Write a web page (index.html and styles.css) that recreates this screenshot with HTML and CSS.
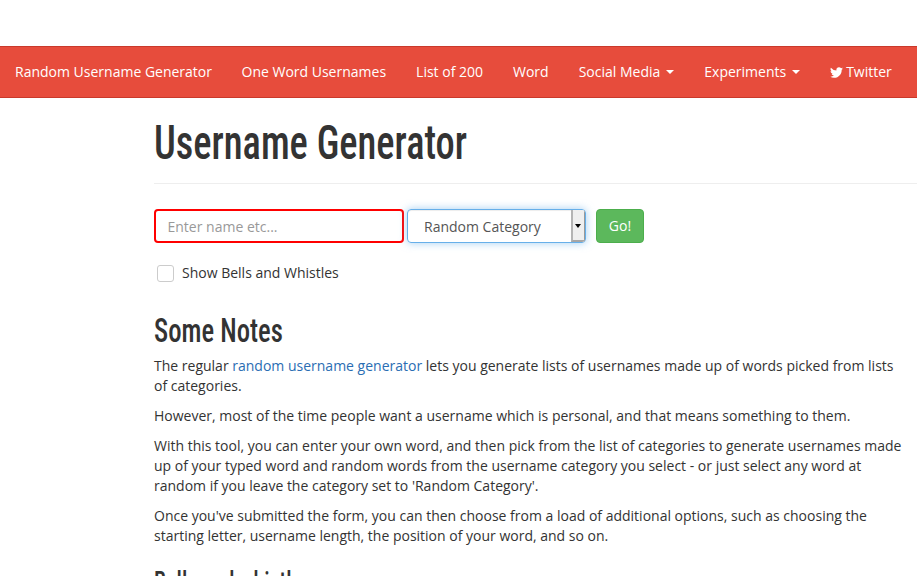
FILE: index.html
```html
<!DOCTYPE html>
<html lang="en">
<head>
<meta charset="utf-8">
<title>Username Generator</title>
<link rel="stylesheet" href="styles.css">
</head>
<body>
<nav class="navbar">
  <a class="brand" href="#">Random Username Generator</a>
  <a class="nav-link" href="#">One Word Usernames</a>
  <a class="nav-link" href="#">List of 200</a>
  <a class="nav-link" href="#">Word</a>
  <a class="nav-link" href="#">Social Media <span class="caret"></span></a>
  <a class="nav-link" href="#">Experiments <span class="caret"></span></a>
  <a class="nav-link" href="#"><svg class="tw" viewBox="0 0 24 24"><path d="M23.95 4.57a10 10 0 0 1-2.82.77 4.96 4.96 0 0 0 2.16-2.72c-.95.55-2 .96-3.12 1.19a4.92 4.92 0 0 0-8.38 4.48A13.96 13.96 0 0 1 1.64 3.16a4.82 4.82 0 0 0-.67 2.48c0 1.71.87 3.21 2.19 4.1a4.9 4.9 0 0 1-2.23-.62v.06a4.92 4.92 0 0 0 3.95 4.83 5 5 0 0 1-2.21.08 4.94 4.94 0 0 0 4.6 3.42A9.87 9.87 0 0 1 0 19.54a14 14 0 0 0 7.56 2.21c9.05 0 14-7.5 14-13.98 0-.21 0-.42-.02-.63a9.94 9.94 0 0 0 2.46-2.55z"/></svg> Twitter</a>
</nav>
<main class="content">
  <h1 class="title"><span class="squeeze">Username Generator</span></h1>
  <form class="gen-form">
    <input class="name-input" type="text" placeholder="Enter name etc...">
    <div class="select-box">
      <span class="select-value">Random Category</span>
      <span class="select-arrow"></span>
    </div>
    <button class="go" type="button">Go!</button>
  </form>
  <label class="check"><span class="check-box"></span>Show Bells and Whistles</label>
  <h2 class="subtitle"><span class="squeeze">Some Notes</span></h2>
  <p>The regular <a class="link" href="#">random username generator</a> lets you generate lists of usernames made up of words picked from lists of categories.</p>
  <p>However, most of the time people want a username which is personal, and that means something to them.</p>
  <p>With this tool, you can enter your own word, and then pick from the list of categories to generate usernames made up of your typed word and random words from the username category you select - or just select any word at random if you leave the category set to 'Random Category'.</p>
  <p>Once you've submitted the form, you can then choose from a load of additional options, such as choosing the starting letter, username length, the position of your word, and so on.</p>
  <h2 class="subtitle lower"><span class="squeeze">Bells and whistles</span></h2>
</main>
</body>
</html>
```
FILE: styles.css
```css
* { box-sizing: border-box; }
html, body { height: 100%; overflow: hidden; }
body {
  margin: 0;
  padding-top: 46px;
  font-family: "Open Sans", sans-serif;
  font-size: 14px;
  line-height: 20px;
  color: #333;
  background: #fff;
}
a { text-decoration: none; }
.navbar {
  display: flex;
  align-items: center;
  height: 52px;
  padding-left: 15px;
  background: #e74c3c;
  border-top: 1px solid #c9392b;
  border-bottom: 1px solid #c9392b;
  white-space: nowrap;
}
.brand, .nav-link { color: #fff; }
.brand { margin-right: 29.5px; }
.nav-link { margin-right: 30px; display: flex; align-items: center; }
.caret {
  width: 0;
  height: 0;
  margin-left: 6px;
  border-top: 4px solid #fff;
  border-left: 4px solid transparent;
  border-right: 4px solid transparent;
}
.tw { width: 13px; height: 13px; fill: #fff; margin-right: 3px; }
.content { width: 748px; margin-left: 154px; }
.squeeze { display: inline-block; transform-origin: left center; transform: scaleX(.785); white-space: nowrap; }
.title {
  margin: 20px 0 0;
  padding-bottom: 15px;
  width: 763px;
  border-bottom: 1px solid #eee;
  font-family: "Liberation Sans Narrow", "Roboto Condensed", "Liberation Sans", sans-serif;
  font-size: 49px;
  line-height: 50px;
  font-weight: 500;
  color: #333;
}
.gen-form { display: flex; align-items: center; margin-top: 25px; }
.name-input {
  width: 250px;
  height: 34px;
  padding: 6px 11.5px;
  border: 2px solid #f00;
  border-radius: 4px;
  outline: 0;
  font: inherit;
  color: #555;
}
.name-input::placeholder { color: #999; opacity: 1; }
.select-box {
  display: flex;
  align-items: stretch;
  width: 179px;
  height: 34px;
  margin-left: 3px;
  border: 1px solid #66afe9;
  border-radius: 4px;
  box-shadow: inset 0 1px 1px rgba(0,0,0,.075), 0 0 8px rgba(102,175,233,.6);
  overflow: hidden;
  color: #555;
}
.select-value { flex: 1; padding: 7px 16px 5px; }
.select-arrow {
  position: relative;
  width: 14px;
  background: #efefef;
  border-left: 2px solid #b4b4b4;
  border-right: 1px solid #999;
  border-bottom: 2px solid #a6a6a6;
}
.select-arrow::after {
  content: "";
  position: absolute;
  left: 2px;
  top: 14px;
  border-top: 4px solid #000;
  border-left: 3px solid transparent;
  border-right: 3px solid transparent;
}
.go {
  width: 48px;
  height: 34px;
  margin-left: 10px;
  padding: 0;
  background: #5cb85c;
  border: 1px solid #4cae4c;
  border-radius: 4px;
  color: #fff;
  font: inherit;
}
.check { display: flex; align-items: center; margin: 20px 0 0 3px; height: 20px; }
.check-box {
  width: 17px;
  height: 17px;
  margin-right: 8px;
  border: 1px solid #ccc;
  border-radius: 3px;
  background: #fff;
}
.subtitle {
  margin: 31px 0 0;
  font-family: "Liberation Sans Narrow", "Roboto Condensed", "Liberation Sans", sans-serif;
  font-size: 34px;
  line-height: 33px;
  font-weight: 500;
  color: #333;
}
.subtitle.lower { margin-top: 19px; font-size: 28px; }
p { margin: 10px 0 0; }
.subtitle + p { margin-top: 9px; }
.link { color: #2a6db3; }
```
